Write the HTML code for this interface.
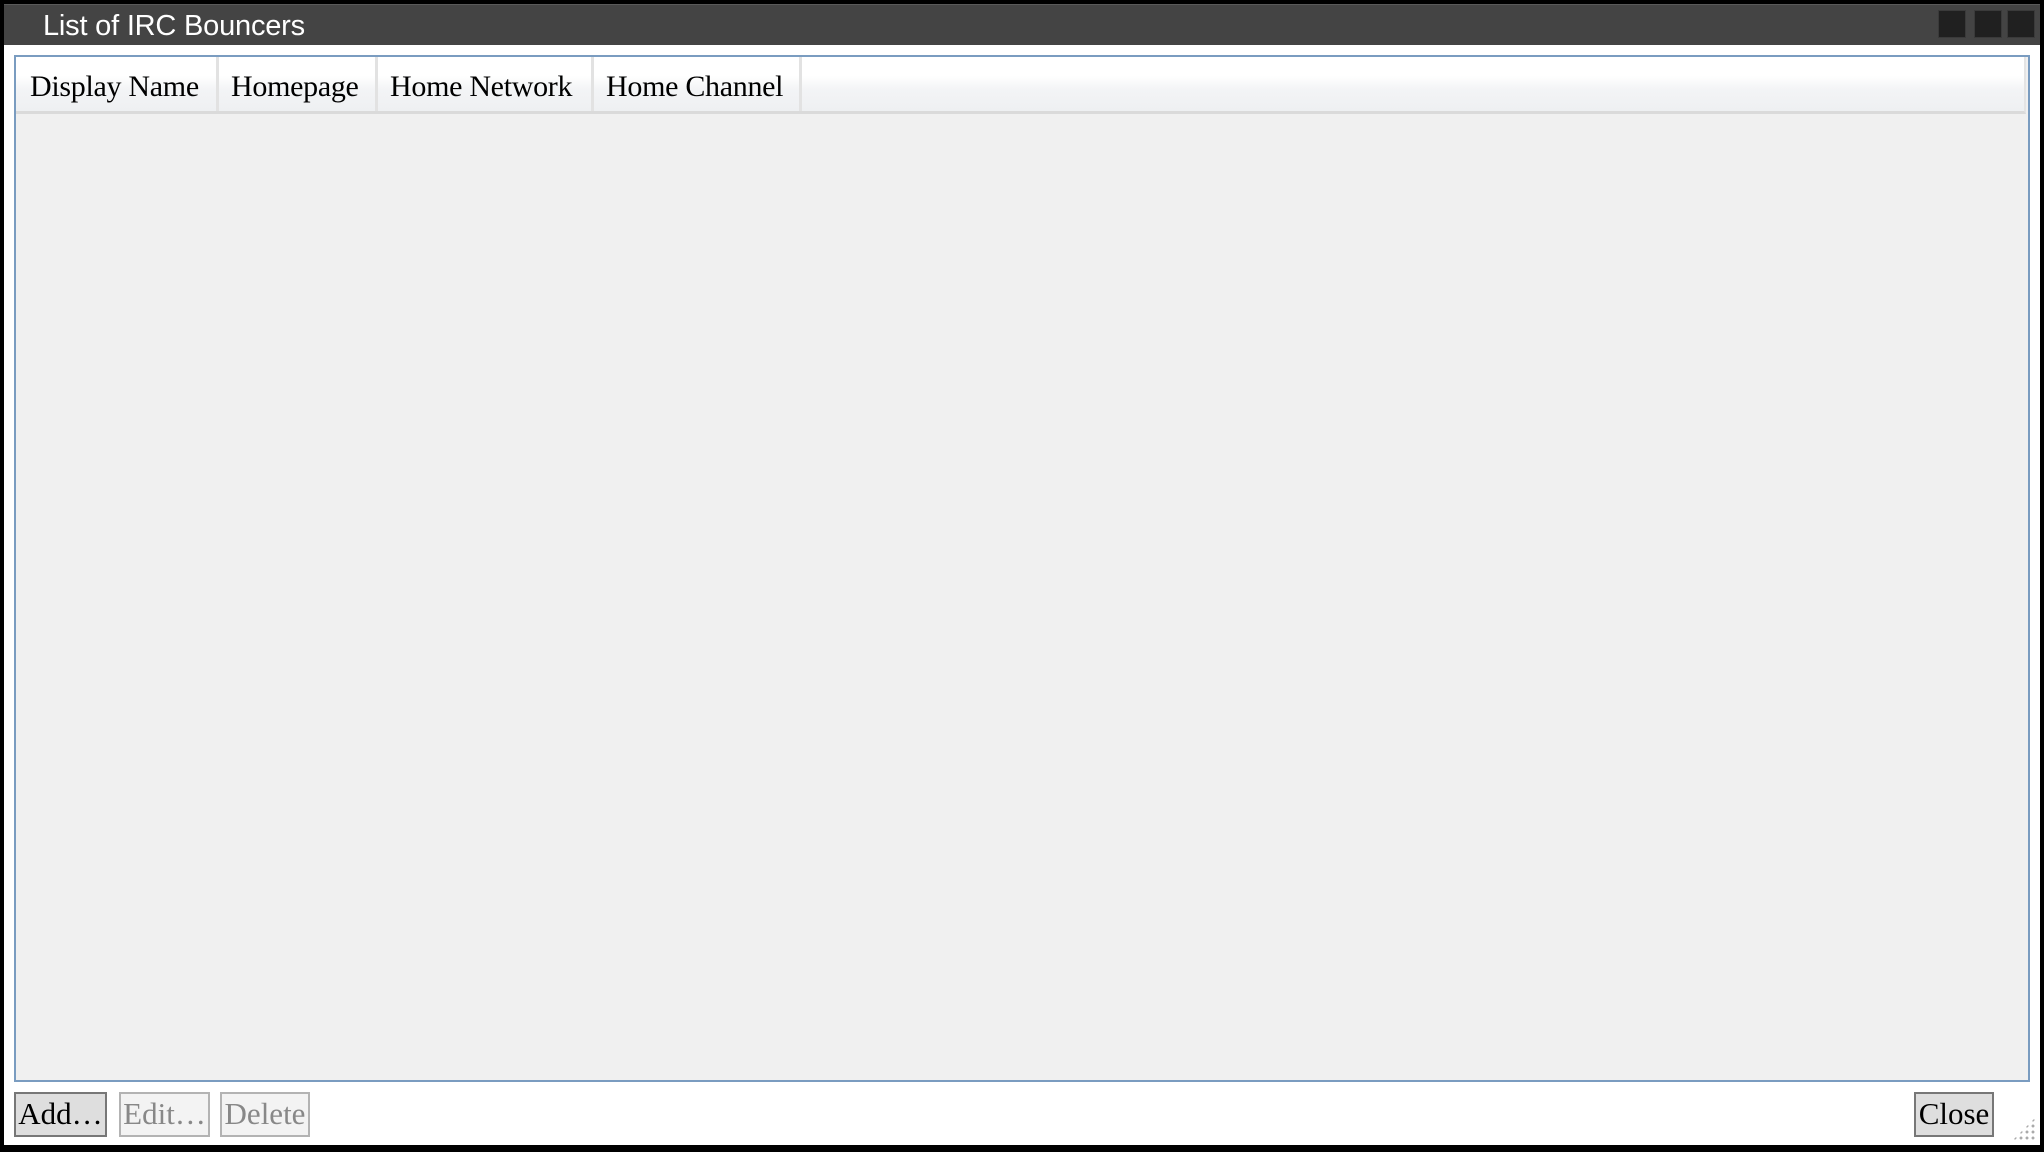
<!DOCTYPE html>
<html><head><meta charset="utf-8"><style>
*{margin:0;padding:0;box-sizing:border-box}
html,body{width:2044px;height:1152px;overflow:hidden;background:#000}
.win{position:absolute;left:4px;top:4px;width:2036px;height:1141px;background:#fff}
.title{position:absolute;left:0;top:0;width:2036px;height:41px;background:#444;border-top:1px solid #5a5a5a}
.title span{position:absolute;left:39px;top:5px;font:29px "Liberation Sans",sans-serif;color:#fff;letter-spacing:-0.2px}
.wb{position:absolute;top:5px;width:28px;height:28px;background:#202020;border:1px solid #3a3a3a}
.list{position:absolute;left:10px;top:51px;width:2016px;height:1027px;border:2px solid #7a9cc0;background:#f0f0f0}
.hdr{position:absolute;left:0;top:0;width:2010px;height:57px;background:linear-gradient(#fff 0,#fff 35%,#f3f4f6 60%,#eef0f2 100%);border-bottom:3px solid #dadada;border-right:2px solid #e4e4e4}
.col{position:absolute;top:0;height:54px;border-right:3px solid #e2e2e2;font:30px "Liberation Serif",serif;color:#000;line-height:60px;padding-left:12px;letter-spacing:-0.3px}
.btn{position:absolute;top:1088px;height:45px;font:31px "Liberation Serif",serif;line-height:39px;text-align:center;border:2px solid #777;background:#dedede;color:#000}
.dis{border-color:#b3b3b3;background:#f3f3f3;color:#888}
.grip{position:absolute;right:4px;bottom:4px;width:24px;height:24px;background-image:radial-gradient(circle,#aaa 1.3px,transparent 1.6px);background-size:6px 6px;clip-path:polygon(100% 0,100% 100%,0 100%)}
</style></head><body>
<div class="win">
<div class="title"><span>List of IRC Bouncers</span>
<div class="wb" style="left:1934px"></div><div class="wb" style="left:1970px"></div><div class="wb" style="left:2003px"></div></div>
<div class="list"><div class="hdr">
<div class="col" style="left:0;width:203px;padding-left:14px">Display Name</div>
<div class="col" style="left:203px;width:159px">Homepage</div>
<div class="col" style="left:362px;width:216px">Home Network</div>
<div class="col" style="left:578px;width:208px">Home Channel</div>
</div></div>
<div class="btn" style="left:10px;width:93px">Add…</div>
<div class="btn dis" style="left:115px;width:91px">Edit…</div>
<div class="btn dis" style="left:216px;width:90px">Delete</div>
<div class="btn" style="left:1910px;width:80px">Close</div>
<div class="grip"></div>
</div>
</body></html>
